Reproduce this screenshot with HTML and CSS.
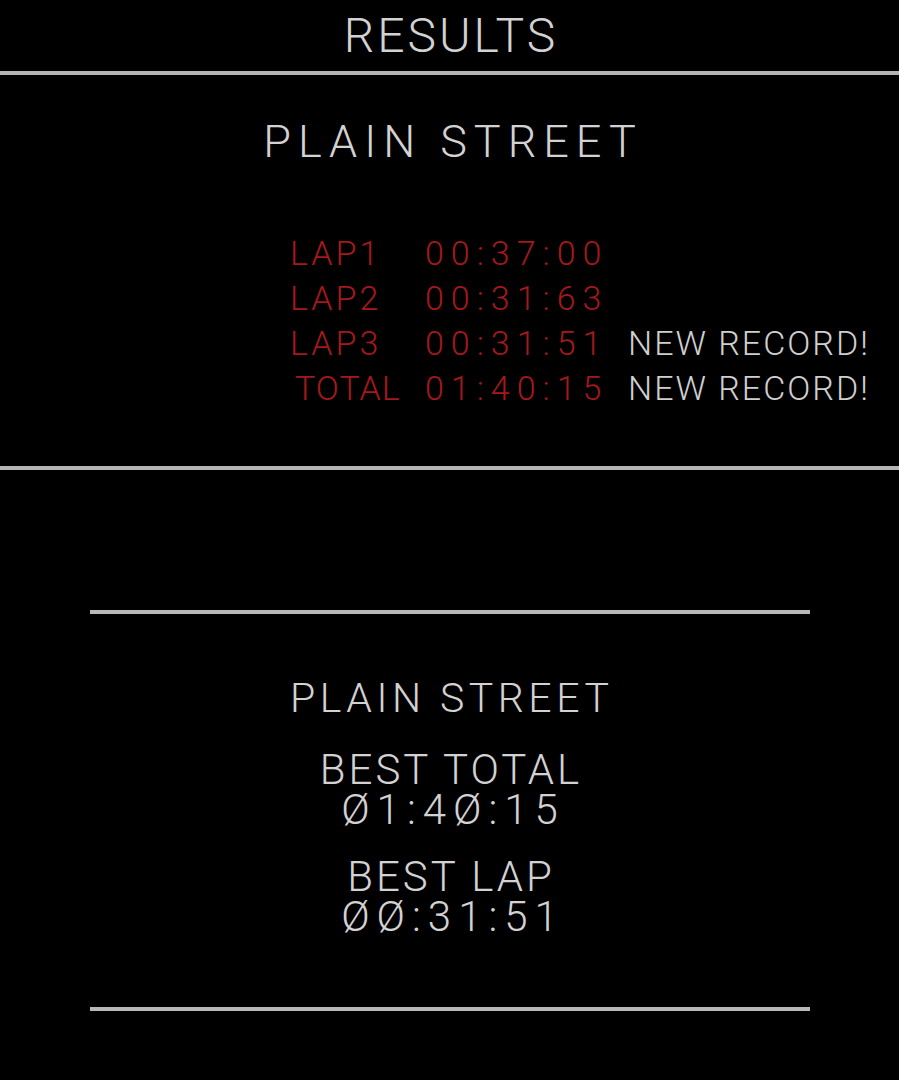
FILE: index.html
```html
<!DOCTYPE html>
<html>
<head>
<meta charset="utf-8">
<link rel="stylesheet" href="styles.css">
</head>
<body>
<div class="screen">
  <header class="title">RESULTS</header>
  <div class="rule"></div>
  <section class="top">
    <h1 class="track">PLAIN STREET</h1>
    <div class="laps">
      <span class="lbl">LAP1</span><span class="time">00:37:00</span><span class="rec"></span>
      <span class="lbl">LAP2</span><span class="time">00:31:63</span><span class="rec"></span>
      <span class="lbl">LAP3</span><span class="time">00:31:51</span><span class="rec">NEW RECORD!</span>
      <span class="lbl total">TOTAL</span><span class="time">01:40:15</span><span class="rec">NEW RECORD!</span>
    </div>
  </section>
  <div class="rule"></div>
  <section class="bottom">
    <div class="rule short"></div>
    <div class="best">
      <h2 class="track2">PLAIN STREET</h2>
      <div class="head h-total">BEST TOTAL</div>
      <div class="val">Ø1:4Ø:15</div>
      <div class="head h-lap">BEST LAP</div>
      <div class="val">ØØ:31:51</div>
    </div>
    <div class="rule short"></div>
  </section>
</div>
</body>
</html>
```

FILE: styles.css
```css
html, body {
  margin: 0;
  padding: 0;
  background: #000;
}
.screen {
  width: 899px;
  height: 1080px;
  background: #000;
  display: flex;
  flex-direction: column;
  font-family: Roboto, "Liberation Sans", sans-serif;
  font-weight: 300;
  color: #d2d2d2;
  overflow: hidden;
}
.title {
  height: 71px;
  box-sizing: border-box;
  padding-top: 12px;
  font-size: 48px;
  line-height: 48px;
  letter-spacing: 3px;
  text-align: center;
  padding-left: 3px;
}
.rule {
  height: 4px;
  background: #b4b4b4;
  flex: none;
}
.top {
  height: 391px;
  box-sizing: border-box;
  padding-top: 44px;
}
.track {
  margin: 0;
  font-weight: 300;
  font-size: 45px;
  line-height: 45px;
  letter-spacing: 7px;
  padding-left: 7px;
  text-align: center;
}
.laps {
  margin-top: 67px;
  display: grid;
  grid-template-columns: 135px 203px auto;
  grid-auto-rows: 45px;
  padding-left: 290px;
  font-size: 34px;
  line-height: 45px;
}
.lbl, .time {
  color: #a3191c;
}
.lbl {
  letter-spacing: 3px;
}
.lbl.total {
  padding-left: 5px;
  letter-spacing: 1px;
}
.time {
  letter-spacing: 7px;
  font-variant-numeric: tabular-nums;
}
.rec {
  color: #cfcfcf;
  letter-spacing: 2px;
  white-space: nowrap;
}
.bottom {
  flex: 1;
  padding-top: 140px;
}
.rule.short {
  width: 720px;
  margin: 0 auto;
  background: #b8b8b8;
}
.best {
  height: 393px;
  box-sizing: border-box;
  padding-top: 64px;
  display: flex;
  flex-direction: column;
  align-items: center;
}
.track2 {
  margin: 0;
  font-weight: 300;
  font-size: 41px;
  line-height: 41px;
  letter-spacing: 4.5px;
  padding-left: 4.5px;
}
.head {
  font-size: 42px;
  line-height: 40px;
  letter-spacing: 3px;
  padding-left: 3px;
}
.h-total {
  margin-top: 31px;
}
.h-lap {
  margin-top: 27px;
}
.val {
  font-size: 42px;
  line-height: 40px;
  letter-spacing: 7px;
  padding-left: 7px;
  font-variant-numeric: tabular-nums;
}
```
